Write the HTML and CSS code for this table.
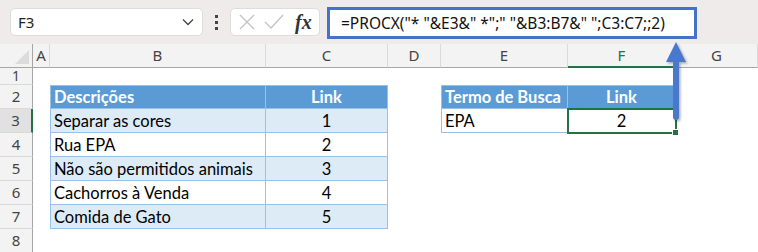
FILE: index.html
```html
<!DOCTYPE html>
<html lang="pt">
<head>
    <meta charset="UTF-8">
    <meta name="viewport" content="width=device-width, initial-scale=1.0">
    <title>PROCX</title>
    <link rel="stylesheet" href="styles.css">
</head>
<body>
    <div class="toolbar">
        <div class="name-box">
            <span>F3</span>
            <svg class="chevron" width="12" height="8" viewBox="0 0 12 8"><path d="M1 1.5 L6 6.5 L11 1.5" fill="none" stroke="#444" stroke-width="1.3"/></svg>
        </div>
        <div class="dots"><i></i><i></i><i></i></div>
        <div class="fx-box">
            <svg width="20" height="20" viewBox="0 0 20 20"><path d="M3 3 L17 17 M17 3 L3 17" stroke="#c4c4c4" stroke-width="1.4"/></svg>
            <svg width="22" height="20" viewBox="0 0 22 20"><path d="M2 10 L8 16 L20 3" fill="none" stroke="#c4c4c4" stroke-width="1.4"/></svg>
            <span class="fx">fx</span>
        </div>
        <div class="formula">=PROCX("* "&amp;E3&amp;" *";" "&amp;B3:B7&amp;" ";C3:C7;;2)</div>
    </div>

    <div class="sheet">
        <!-- column headers -->
        <div class="corner"></div>
        <div class="col-head">A</div>
        <div class="col-head">B</div>
        <div class="col-head">C</div>
        <div class="col-head">D</div>
        <div class="col-head">E</div>
        <div class="col-head active">F</div>
        <div class="col-head">G</div>

        <!-- row 1 -->
        <div class="row-head short">1</div>
        <div></div><div></div><div></div><div></div><div></div><div></div><div></div>

        <!-- row 2 -->
        <div class="row-head">2</div>
        <div></div>
        <div class="cell th first top">Descrições</div>
        <div class="cell th top center">Link</div>
        <div></div>
        <div class="cell th first top">Termo de Busca</div>
        <div class="cell th top center">Link</div>
        <div></div>

        <!-- row 3 -->
        <div class="row-head active">3</div>
        <div></div>
        <div class="cell band first">Separar as cores</div>
        <div class="cell band center">1</div>
        <div></div>
        <div class="cell first">EPA</div>
        <div class="cell center selected">2<span class="handle"></span></div>
        <div></div>

        <!-- row 4 -->
        <div class="row-head">4</div>
        <div></div>
        <div class="cell first">Rua EPA</div>
        <div class="cell center">2</div>
        <div></div><div></div><div></div><div></div>

        <!-- row 5 -->
        <div class="row-head">5</div>
        <div></div>
        <div class="cell band first">Não são permitidos animais</div>
        <div class="cell band center">3</div>
        <div></div><div></div><div></div><div></div>

        <!-- row 6 -->
        <div class="row-head">6</div>
        <div></div>
        <div class="cell first">Cachorros à Venda</div>
        <div class="cell center">4</div>
        <div></div><div></div><div></div><div></div>

        <!-- row 7 -->
        <div class="row-head">7</div>
        <div></div>
        <div class="cell band first">Comida de Gato</div>
        <div class="cell band center">5</div>
        <div></div><div></div><div></div><div></div>

        <!-- row 8 -->
        <div class="row-head">8</div>
        <div></div><div></div><div></div><div></div><div></div><div></div><div></div>
    </div>

    <!-- callout arrow pointing at the formula -->
    <svg class="arrow" width="30" height="86" viewBox="0 0 30 86">
        <defs>
            <filter id="soft" x="-50%" y="-20%" width="200%" height="140%">
                <feDropShadow dx="1.5" dy="1.5" stdDeviation="1.2" flood-color="#000" flood-opacity="0.3"/>
            </filter>
        </defs>
        <g filter="url(#soft)" fill="#4a78cc">
            <polygon points="13,2 3,22 23,22"/>
            <rect x="10" y="20" width="6" height="60" rx="3"/>
        </g>
    </svg>
</body>
</html>
```

FILE: styles.css
```css
body {
    margin: 0;
    width: 758px;
    height: 252px;
    overflow: hidden;
    background: #ffffff;
    position: relative;
    font-family: "Noto Sans", sans-serif;
}

/* formula bar */
.toolbar {
    height: 44px;
    background-color: #efebeb;
    display: flex;
    align-items: flex-start;
    padding-top: 8px;
    box-sizing: border-box;
}
.name-box {
    margin-left: 10px;
    width: 193px;
    height: 28px;
    background: #fff;
    border: 1px solid #e0dcdc;
    border-radius: 5px;
    box-sizing: border-box;
    display: flex;
    align-items: center;
    justify-content: space-between;
    padding: 0 8px 0 7px;
    font-size: 15px;
    color: #222;
}
.dots {
    width: 27px;
    height: 28px;
    display: flex;
    flex-direction: column;
    align-items: center;
    justify-content: center;
    gap: 3px;
}
.dots i {
    width: 3px;
    height: 3px;
    background: #444;
}
.fx-box {
    width: 90px;
    height: 28px;
    background: #fff;
    border: 1px solid #e0dcdc;
    border-radius: 5px;
    box-sizing: border-box;
    display: flex;
    align-items: center;
    padding-left: 6px;
    gap: 6px;
}
.fx {
    font-family: "Liberation Serif", serif;
    font-style: italic;
    font-weight: bold;
    font-size: 20px;
    color: #333;
    margin-left: 4px;
}
.formula {
    margin-left: 7px;
    margin-top: -1px;
    width: 370px;
    height: 32px;
    background: #fff;
    border: 3px solid #4472c4;
    box-sizing: border-box;
    padding-left: 11px;
    font-size: 15.5px;
    line-height: 26px;
    color: #111;
    white-space: nowrap;
}

/* worksheet grid */
.sheet {
    display: grid;
    grid-template-columns: 33px 17px 216px 122px 53px 127px 108px 82px;
    grid-template-rows: 24px 17px repeat(7, 24px);
    font-family: Lato, sans-serif;
    font-size: 16.5px;
}
.corner {
    background: #f3f3f3;
    border-right: 1px solid #a6a6a6;
    border-bottom: 1px solid #a6a6a6;
    position: relative;
}
.corner::after {
    content: "";
    position: absolute;
    right: 3px;
    bottom: 3px;
    border-left: 14px solid transparent;
    border-bottom: 14px solid #dcdcdc;
}
.col-head {
    background: #f3f3f3;
    border-right: 1px solid #dadada;
    border-bottom: 1px solid #a6a6a6;
    font-family: "Noto Sans", sans-serif;
    font-size: 15px;
    color: #444;
    text-align: center;
    line-height: 23px;
}
.col-head.active {
    color: #217346;
    border-bottom: 2px solid #217346;
}
.row-head {
    background: #f3f3f3;
    border-right: 1px solid #a6a6a6;
    border-bottom: 1px solid #dadada;
    font-family: "Noto Sans", sans-serif;
    font-size: 15px;
    color: #444;
    text-align: center;
    line-height: 23px;
}
.row-head.short {
    font-size: 14px;
    line-height: 16px;
}
.row-head.active {
    background: #e1e1e1;
    border-right: 2px solid #217346;
}

/* table cells */
.cell {
    border-right: 1px solid #9bc2e6;
    border-bottom: 1px solid #9bc2e6;
    padding-left: 3px;
    line-height: 24px;
    color: #000;
    white-space: nowrap;
    position: relative;
}
.cell.first {
    border-left: 1px solid #9bc2e6;
}
.cell.top {
    border-top: 1px solid #9bc2e6;
    line-height: 23px;
}
.cell.th {
    background: #5b9bd5;
    color: #fff;
    font-weight: bold;
}
.cell.band {
    background: #ddebf7;
}
.cell.center {
    text-align: center;
    padding-left: 0;
}
.cell.selected {
    outline: 2px solid #217346;
    outline-offset: -1px;
}
.handle {
    position: absolute;
    right: -4px;
    bottom: -4px;
    width: 5px;
    height: 5px;
    background: #217346;
    border: 1px solid #fff;
}

.arrow {
    position: absolute;
    left: 663px;
    top: 40px;
}
```
